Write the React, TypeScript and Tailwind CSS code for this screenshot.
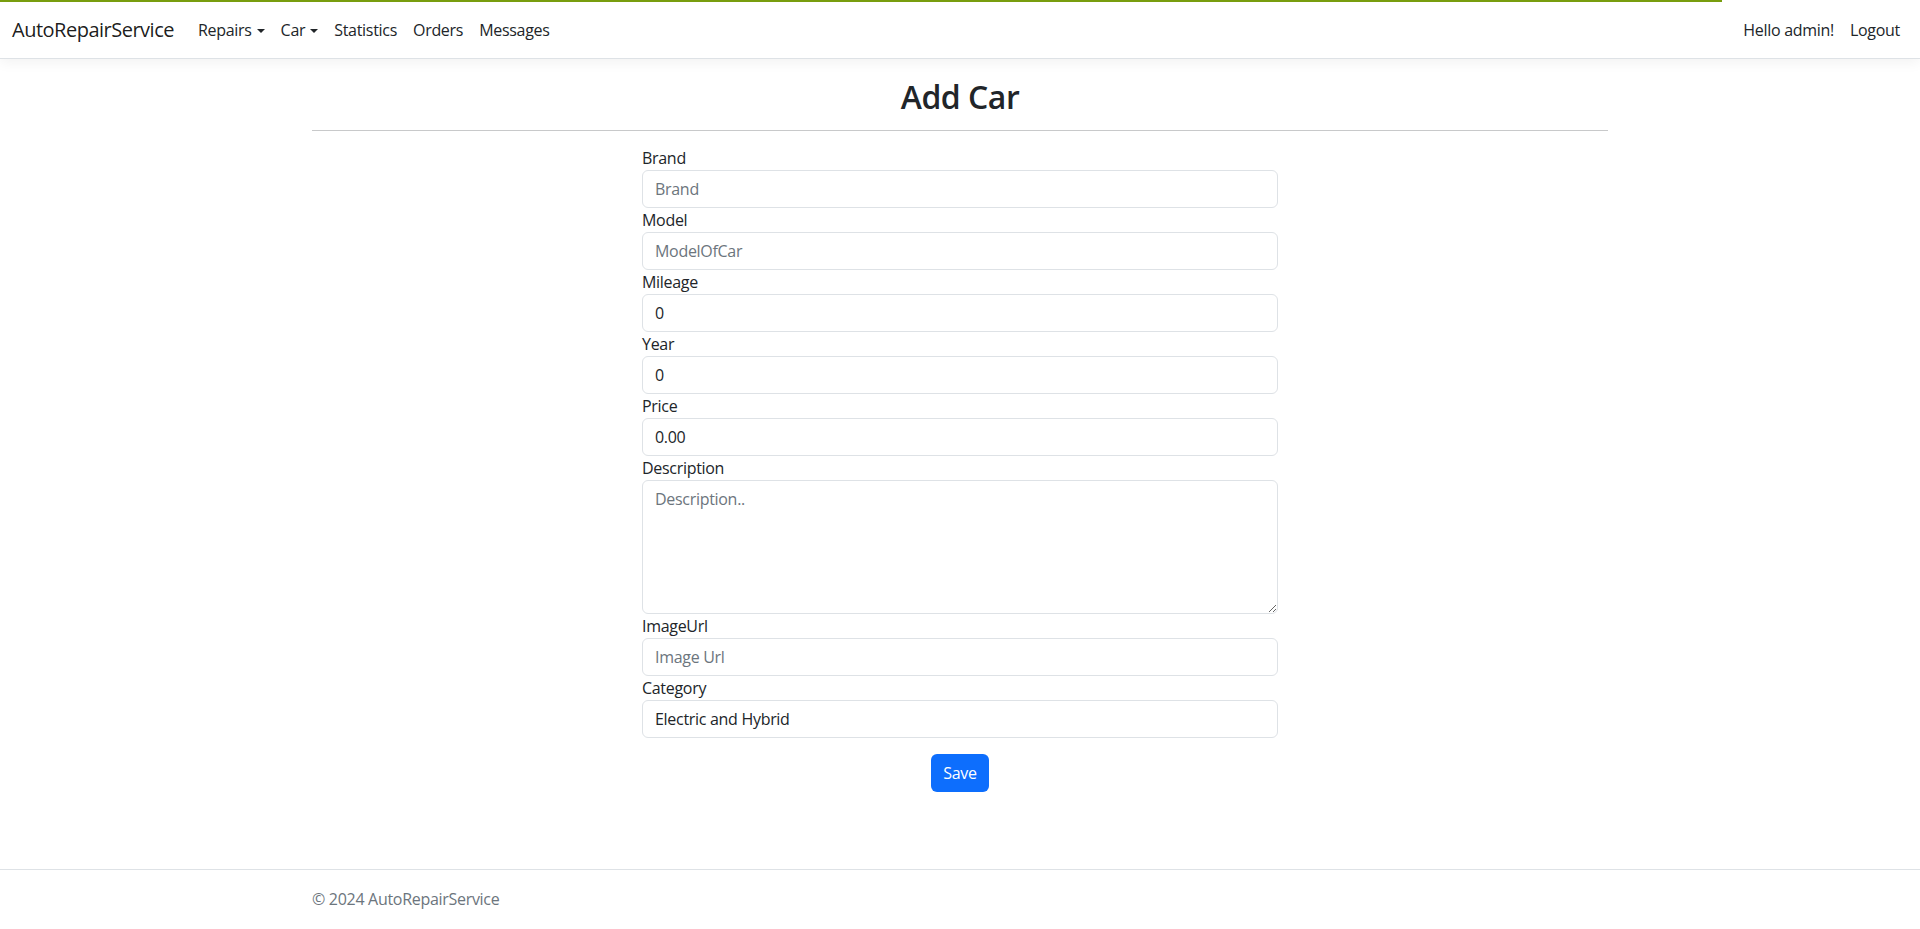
import React from "react";

const font = "font-['Open_Sans',sans-serif]";

function Caret() {
  return (
    <span className="ml-[5px] inline-block h-0 w-0 border-x-[4.8px] border-t-[4.8px] border-x-transparent border-t-[#212529] align-[3px]" />
  );
}

function Field({
  label,
  value,
  placeholder,
}: {
  label: string;
  value?: string;
  placeholder?: string;
}) {
  return (
    <div>
      <label className="block text-[16px] leading-[24px]">{label}</label>
      <input
        type="text"
        defaultValue={value}
        placeholder={placeholder}
        className="block h-[38px] w-full rounded-[6px] border border-[#dee2e6] bg-white px-[12px] py-[6px] text-[16px] leading-[24px] tracking-[-0.3px] text-[#212529] placeholder:text-[#6c757d] outline-none"
      />
    </div>
  );
}

export default function App() {
  return (
    <div className={`relative flex min-h-screen flex-col bg-white tracking-[-0.3px] text-[#212529] ${font}`}>
      {/* page load bar */}
      <div className="absolute left-0 top-0 z-20 h-[2px] w-[1722px] bg-[#789d0e]" />

      {/* Navbar */}
      <nav className="relative z-10 flex h-[59px] items-center justify-between border-b border-[#dee2e6] bg-white px-[12px] pt-[2px] shadow-[0_4px_12px_rgba(0,0,0,0.05)]">
        <div className="flex items-center">
          <span className="mr-[16px] text-[20px] leading-[30px] tracking-[-0.5px] text-[rgba(0,0,0,0.9)]">
            AutoRepairService
          </span>
          <ul className="flex items-center text-[16px] leading-[24px]">
            <li className="px-[8px] py-[8px]">
              Repairs
              <Caret />
            </li>
            <li className="px-[8px] py-[8px]">
              Car
              <Caret />
            </li>
            <li className="px-[8px] py-[8px]">Statistics</li>
            <li className="px-[8px] py-[8px]">Orders</li>
            <li className="px-[8px] py-[8px]">Messages</li>
          </ul>
        </div>
        <ul className="flex items-center text-[16px] leading-[24px]">
          <li className="px-[8px] py-[8px]">Hello admin!</li>
          <li className="px-[8px] py-[8px]">Logout</li>
        </ul>
      </nav>

      {/* Main content */}
      <main className="mx-auto w-[1296px] flex-1">
        <h2 className="mt-[19px] text-center text-[32px] font-semibold leading-[38px] tracking-[-0.5px]">Add Car</h2>
        <div className="mt-[14px] h-px bg-[#c8c9ca]" />

        <form className="mx-auto mt-[15px] w-[636px]" onSubmit={(e) => e.preventDefault()}>
          <Field label="Brand" placeholder="Brand" />
          <Field label="Model" placeholder="ModelOfCar" />
          <Field label="Mileage" value="0" />
          <Field label="Year" value="0" />
          <Field label="Price" value="0.00" />
          <div>
            <label className="block text-[16px] leading-[24px]">Description</label>
            <textarea
              rows={5}
              placeholder="Description.."
              className="block h-[134px] w-full rounded-[6px] border border-[#dee2e6] bg-white px-[12px] py-[6px] text-[16px] leading-[24px] tracking-[-0.3px] placeholder:text-[#6c757d] outline-none"
            />
          </div>
          <Field label="ImageUrl" placeholder="Image Url" />
          <div>
            <label className="block text-[16px] leading-[24px]">Category</label>
            <select
              defaultValue="Electric and Hybrid"
              className="block h-[38px] w-full appearance-none rounded-[6px] border border-[#dee2e6] bg-white px-[12px] py-[6px] text-[16px] leading-[24px] tracking-[-0.3px] text-[#212529] outline-none"
            >
              <option>Electric and Hybrid</option>
              <option>Sedan</option>
              <option>SUV</option>
            </select>
          </div>
          <div className="mt-[16px] flex justify-center">
            <button
              type="submit"
              className="h-[38px] rounded-[6px] bg-[#0d6efd] px-[12px] text-[16px] leading-[24px] tracking-[-0.3px] text-white"
            >
              Save
            </button>
          </div>
        </form>
      </main>

      {/* Footer */}
      <footer className="h-[60px] border-t border-[#dee2e6] text-[16px] leading-[59px] text-[#6c757d]">
        <div className="mx-auto w-[1296px]">© 2024 AutoRepairService</div>
      </footer>
    </div>
  );
}
